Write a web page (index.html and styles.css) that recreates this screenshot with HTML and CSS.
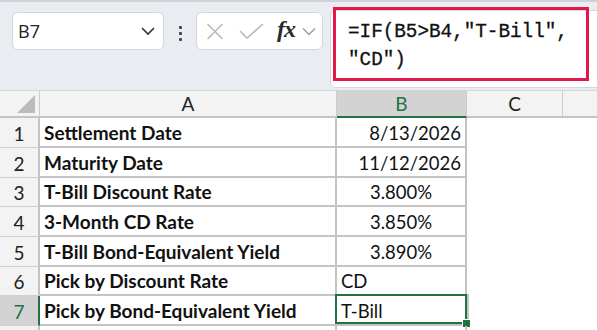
FILE: index.html
```html
<!DOCTYPE html>
<html>
<head>
<meta charset="utf-8">
<link rel="stylesheet" href="styles.css">
</head>
<body>
<div class="toolbar">
  <div class="namebox">
    <span class="nb-text">B7</span>
    <svg class="chev" width="16" height="10" viewBox="0 0 16 10"><path d="M2 2 L8 8 L14 2" fill="none" stroke="#333" stroke-width="1.6"/></svg>
  </div>
  <div class="dots"><i></i><i></i><i></i></div>
  <div class="fxbox">
    <svg class="ic" width="18" height="17" viewBox="0 0 18 17"><path d="M1.5 1 L16.5 16 M16.5 1 L1.5 16" stroke="#b9b9b9" stroke-width="1.6" fill="none"/></svg>
    <svg class="ic chk" width="25" height="16" viewBox="0 0 25 16"><path d="M1 8 L8 15 L24 1" stroke="#b9b9b9" stroke-width="1.6" fill="none"/></svg>
    <span class="fx">fx</span>
    <svg class="chev2" width="14" height="9" viewBox="0 0 14 9"><path d="M1 1.5 L7 7.5 L13 1.5" fill="none" stroke="#9a9a9a" stroke-width="1.4"/></svg>
  </div>
  <div class="formulabar">
    <div class="formula">=IF(B5&gt;B4,"T-Bill",<br>"CD")</div>
  </div>
  <div class="highlight"></div>
</div>
<div class="sheet">
  <div class="hd corner"><span class="tri"></span></div>
  <div class="hd">A</div>
  <div class="hd sel">B</div>
  <div class="hd">C</div>
  <div class="hd last"></div>

  <div class="rh">1</div><div class="c a">Settlement Date</div><div class="c b r">8/13/2026</div><div class="e"></div><div class="e"></div>
  <div class="rh">2</div><div class="c a">Maturity Date</div><div class="c b r">11/12/2026</div><div class="e"></div><div class="e"></div>
  <div class="rh">3</div><div class="c a">T-Bill Discount Rate</div><div class="c b m">3.800%</div><div class="e"></div><div class="e"></div>
  <div class="rh">4</div><div class="c a">3-Month CD Rate</div><div class="c b m">3.850%</div><div class="e"></div><div class="e"></div>
  <div class="rh">5</div><div class="c a">T-Bill Bond-Equivalent Yield</div><div class="c b m">3.890%</div><div class="e"></div><div class="e"></div>
  <div class="rh">6</div><div class="c a">Pick by Discount Rate</div><div class="c b">CD</div><div class="e"></div><div class="e"></div>
  <div class="rh rsel">7</div><div class="c a">Pick by Bond-Equivalent Yield</div><div class="c b active">T-Bill<span class="handle"></span></div><div class="e"></div><div class="e"></div>
  <div class="rh"></div><div class="c a"></div><div class="c b"></div><div class="e"></div><div class="e"></div>
</div>
</body>
</html>
```
FILE: styles.css
```css
html, body {
  margin: 0;
  padding: 0;
  width: 597px;
  height: 330px;
  overflow: hidden;
  background: #ffffff;
}
.toolbar {
  position: relative;
  height: 90px;
  box-sizing: border-box;
  background: #e9edf1;
  border-top: 2px solid #cfd3d7;
  display: flex;
  align-items: flex-start;
  padding-left: 12px;
}
.namebox {
  margin-top: 10px;
  width: 152px;
  height: 38px;
  box-sizing: border-box;
  background: #fff;
  border: 1px solid #d3d7db;
  border-radius: 6px;
  display: flex;
  align-items: center;
  justify-content: space-between;
  padding: 0 7px 0 5px;
}
.nb-text {
  font-family: "Open Sans", "Noto Sans", sans-serif;
  font-size: 18px;
  color: #222;
}
.dots {
  width: 32px;
  margin-top: 24px;
  display: flex;
  flex-direction: column;
  align-items: center;
  gap: 3px;
}
.dots i {
  display: block;
  width: 3px;
  height: 3px;
  background: #444;
  border-radius: 1px;
}
.fxbox {
  margin-top: 10px;
  width: 127px;
  height: 38px;
  box-sizing: border-box;
  background: #fff;
  border: 1px solid #d3d7db;
  border-radius: 6px;
  display: flex;
  align-items: center;
  padding-left: 9px;
}
.ic { margin-right: 15px; }
.chk { margin-right: 13px; }
.fx {
  font-family: "Liberation Serif", serif;
  font-style: italic;
  font-weight: 700;
  font-size: 24px;
  color: #2a2a2a;
  margin-right: 7px;
  margin-top: -3px;
  letter-spacing: -1px;
}
.formulabar {
  margin-top: 8px;
  margin-left: 7px;
  flex: 1;
  height: 78px;
  box-sizing: border-box;
  background: #fff;
  border: 1px solid #d3d7db;
  border-radius: 6px;
  margin-right: -10px;
  padding: 7px 0 0 17px;
}
.formula {
  font-family: "Liberation Mono", monospace;
  font-size: 19.3px;
  line-height: 28px;
  color: #111;
  -webkit-text-stroke: 0.3px #111;
}
.highlight {
  position: absolute;
  left: 333px;
  top: 5px;
  width: 256px;
  height: 74px;
  box-sizing: border-box;
  border: 3px solid #e2184b;
}
.sheet {
  display: grid;
  grid-template-columns: 40px 297px 130px 96px 1fr;
  grid-template-rows: 28px 30px 30px 29px 30px 30px 29px 30px 8px;
  height: 240px;
  overflow: hidden;
  font-family: "Lato", "Open Sans", sans-serif;
  font-size: 19px;
  color: #111;
}
.hd {
  background: #f3f3f3;
  border-top: 1px solid #d6d6d6;
  border-right: 1px solid #cccccc;
  border-bottom: 2px solid #c4c4c4;
  display: flex;
  align-items: center;
  justify-content: center;
  color: #222;
  position: relative;
}
.hd.last { border-right: none; }
.hd.sel {
  background: #d3d3d3;
  border-bottom: 2px solid #217346;
  color: #217346;
}
.tri {
  position: absolute;
  right: 4px;
  bottom: 3px;
  width: 0;
  height: 0;
  border-left: 18px solid transparent;
  border-bottom: 18px solid #bcbcbc;
}
.rh {
  background: #f3f3f3;
  border-right: 2px solid #c4c4c4;
  border-bottom: 1px solid #d0d0d0;
  display: flex;
  align-items: flex-end;
  justify-content: center;
  padding-bottom: 2px;
  color: #222;
}
.rh.rsel {
  background: #d3d3d3;
  border-right: 2px solid #217346;
  color: #217346;
}
.c {
  border-right: 2px solid #c4c4c4;
  border-bottom: 2px solid #c4c4c4;
  display: flex;
  align-items: flex-end;
  padding: 0 4px 2px 4px;
  white-space: nowrap;
  overflow: hidden;
  position: relative;
}
.c.a { font-weight: 700; }
.c.b { font-size: 18.5px; }
.c.r { justify-content: flex-end; }
.c.m { justify-content: center; }
.c.active {
  overflow: visible;
  box-shadow: inset 0 0 0 2px #217346;
  margin: -2px -2px 0 -2px;
  padding-left: 6px;
}
.handle {
  position: absolute;
  right: -4px;
  bottom: -4px;
  width: 7px;
  height: 7px;
  background: #217346;
  border: 1px solid #fff;
}
.e { background: #fff; }
```
